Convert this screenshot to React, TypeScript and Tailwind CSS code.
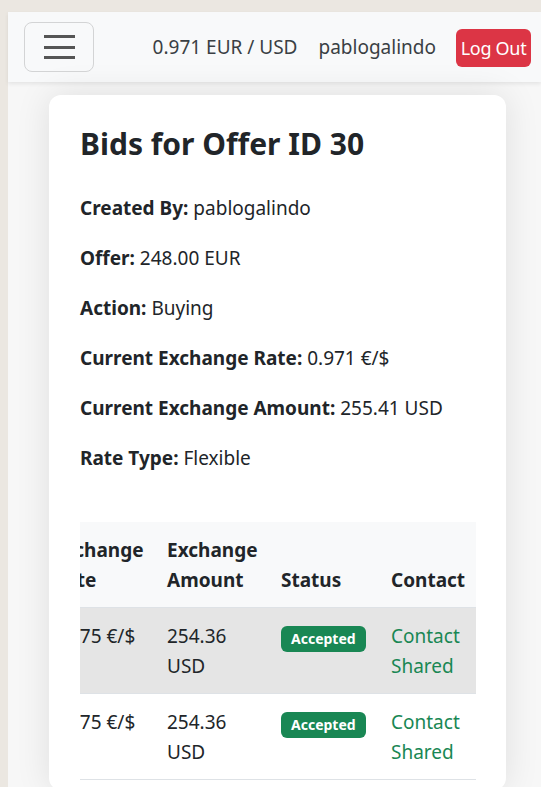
import React, { useEffect, useRef } from 'react';

const bids = [
  { id: 41, bidder: 'mariaperez', rate: '0.975 €/$', amount: '254.36 USD', status: 'Accepted', highlight: true },
  { id: 42, bidder: 'jorgeruiz', rate: '0.975 €/$', amount: '254.36 USD', status: 'Accepted', highlight: false },
];

const App: React.FC = () => {
  const scrollRef = useRef<HTMLDivElement>(null);
  const rateRef = useRef<HTMLTableCellElement>(null);

  useEffect(() => {
    // the table is scrolled so the rate column is half out of view
    if (scrollRef.current && rateRef.current) {
      scrollRef.current.scrollLeft = rateRef.current.offsetLeft + 37;
    }
  }, []);

  return (
    <div className="min-h-[787px] bg-[#ebe7e1] pt-[12px] pl-[8px] font-['Noto_Sans',sans-serif] text-[#212529]">
      <div className="min-h-[775px] bg-[#f7f7f7]">
        {/* Navbar */}
        <nav className="h-[70px] bg-[#f8f9fa] shadow-[0_2px_4px_rgba(0,0,0,0.08)] flex items-center pl-[16px] pr-[10px]">
          <button className="w-[70px] h-[50px] border border-[#d3d4d5] rounded-lg flex flex-col items-center justify-center gap-[7.5px]">
            <span className="block w-[31px] h-[3px] bg-[#555]"></span>
            <span className="block w-[31px] h-[3px] bg-[#555]"></span>
            <span className="block w-[31px] h-[3px] bg-[#555]"></span>
          </button>
          <div className="ml-auto flex items-center text-[19px] text-[#3a3f44] pt-[1px]">
            <span>0.971 EUR / USD</span>
            <span className="ml-[21px]">pablogalindo</span>
            <button className="ml-[20px] w-[75px] h-[38px] rounded-md bg-[#dc3545] text-white text-[18px] leading-none tracking-[-0.3px]">
              Log Out
            </button>
          </div>
        </nav>

        {/* Card */}
        <div className="pt-[13px] pl-[41px] pr-[35px]">
          <div className="bg-white rounded-xl shadow-[0_0_35px_rgba(0,0,0,0.1)] pt-[30px] pl-[31px] pr-[30px] pb-[10px]">
            <h2 className="text-[30px] font-bold leading-[38px] mb-[30px]">Bids for Offer ID 30</h2>
            <div className="text-[19px] leading-[30px] flex flex-col gap-[20px]">
              <p><b>Created By:</b> pablogalindo</p>
              <p><b>Offer:</b> 248.00 EUR</p>
              <p><b>Action:</b> Buying</p>
              <p><b>Current Exchange Rate:</b> 0.971 €/$</p>
              <p><b>Current Exchange Amount:</b> 255.41 USD</p>
              <p><b>Rate Type:</b> Flexible</p>
            </div>

            <div ref={scrollRef} className="mt-[49px] overflow-hidden">
              <table className="table-fixed w-[653px] text-[19px] leading-[30px] text-left border-collapse">
                <thead className="bg-[#f8f9fa]">
                  <tr>
                    <th className="w-[80px] px-[10px] py-[12.5px] align-bottom">Bid ID</th>
                    <th className="w-[140px] px-[10px] py-[12.5px] align-bottom">Bidder</th>
                    <th ref={rateRef} className="w-[114px] px-[10px] py-[12.5px] align-bottom">Exchange Rate</th>
                    <th className="w-[114px] px-[10px] py-[12.5px] align-bottom">Exchange Amount</th>
                    <th className="w-[110px] px-[10px] py-[12.5px] align-bottom">Status</th>
                    <th className="w-[95px] px-[10px] py-[12.5px] align-bottom">Contact</th>
                  </tr>
                </thead>
                <tbody>
                  {bids.map(bid => (
                    <tr key={bid.id} className={`border-t border-[#dee2e6] ${bid.highlight ? 'bg-[#e5e5e5]' : 'bg-white border-b'}`}>
                      <td className="px-[10px] py-[12.5px] align-top">{bid.id}</td>
                      <td className="px-[10px] py-[12.5px] align-top">{bid.bidder}</td>
                      <td className="px-[10px] py-[12.5px] align-top whitespace-nowrap">{bid.rate}</td>
                      <td className="px-[10px] py-[12.5px] align-top">{bid.amount}</td>
                      <td className="px-[10px] py-[12.5px] align-top">
                        <span className="inline-block mt-[5px] bg-[#198754] text-white text-[14px] font-bold leading-none px-[10px] py-[6px] rounded-md whitespace-nowrap">
                          {bid.status}
                        </span>
                      </td>
                      <td className="px-[10px] py-[12.5px] align-top text-[#198754]">Contact Shared</td>
                    </tr>
                  ))}
                </tbody>
              </table>
            </div>
          </div>
        </div>
      </div>
    </div>
  );
};

export default App;
